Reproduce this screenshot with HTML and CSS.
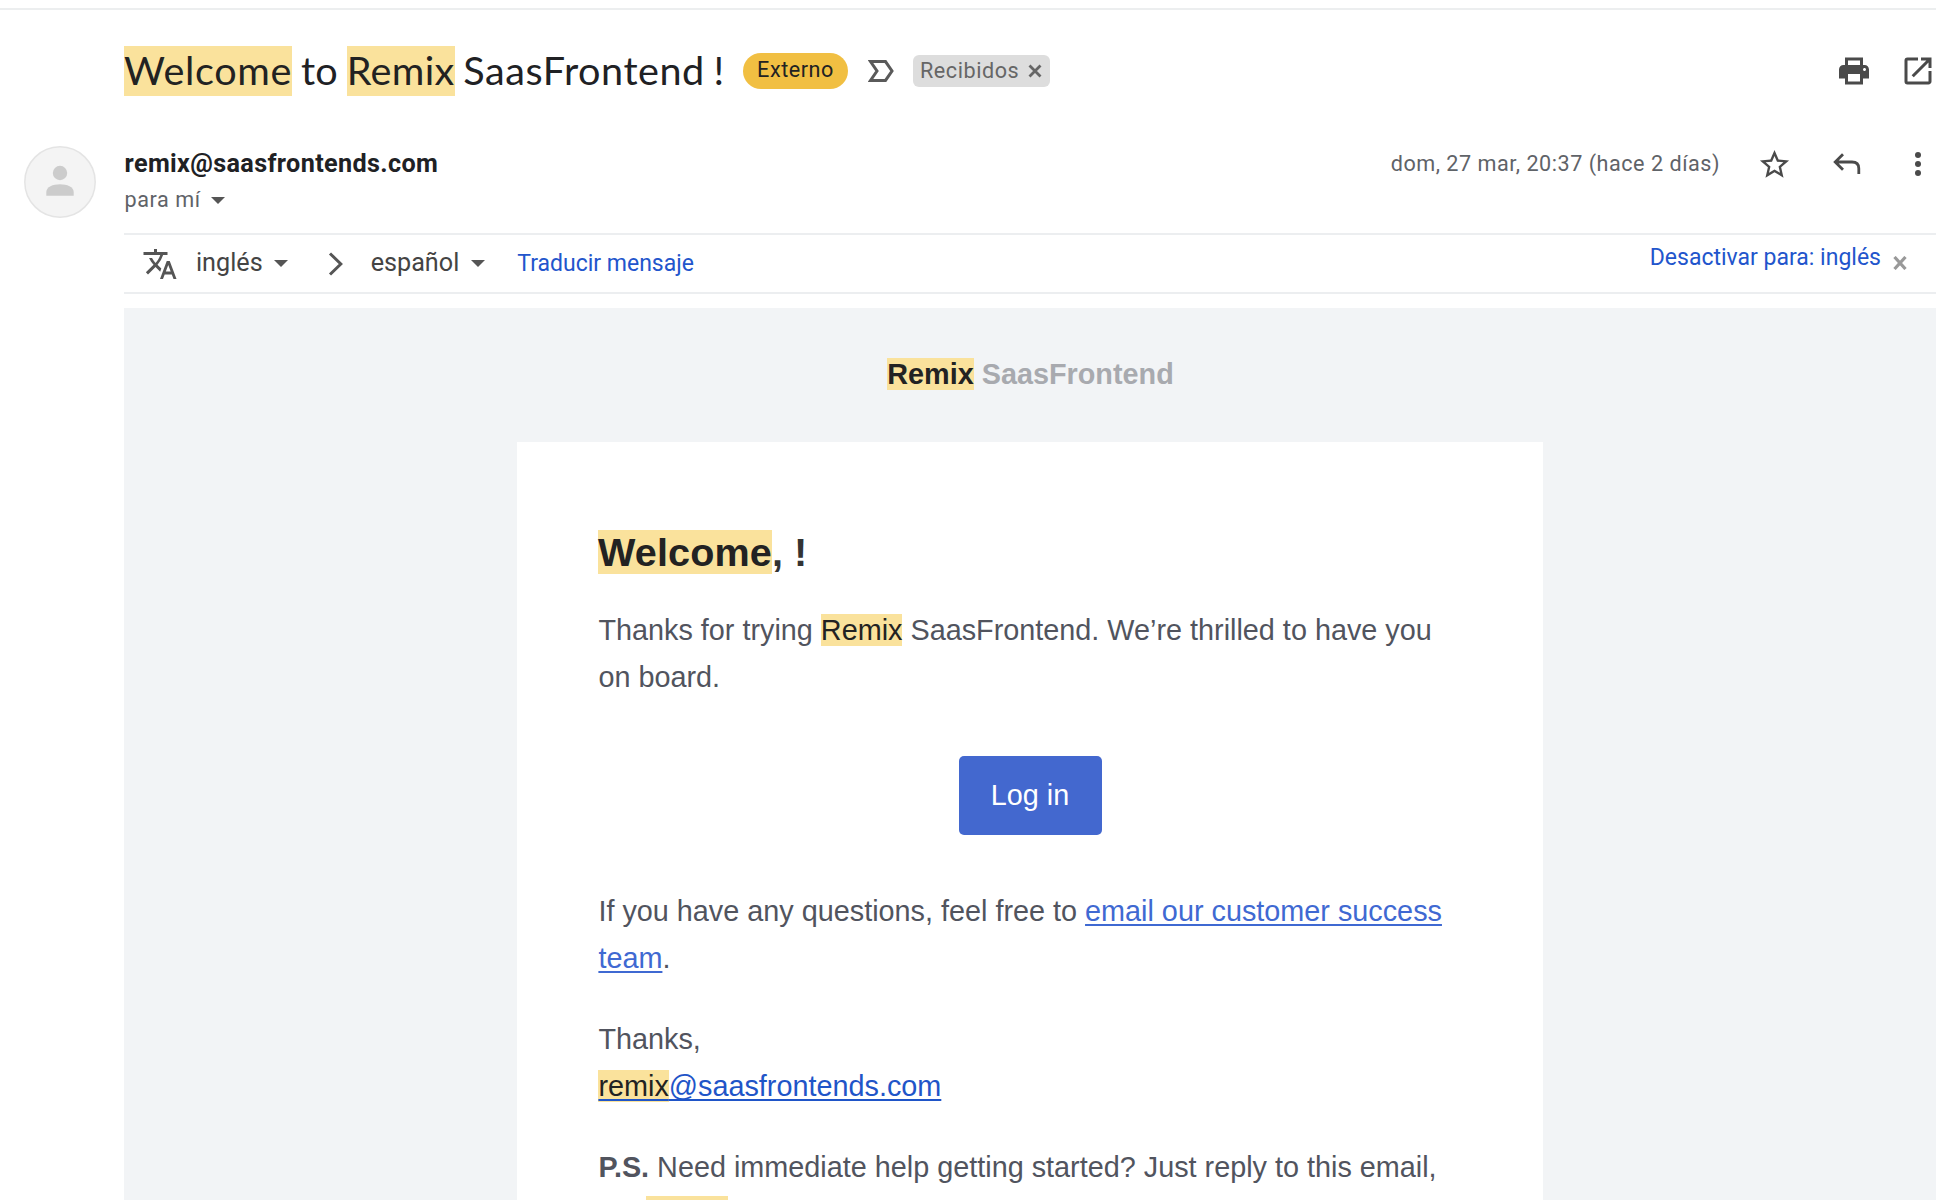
FILE: index.html
```html
<!DOCTYPE html>
<html lang="es">
<head>
<meta charset="utf-8">
<title>Welcome to Remix SaasFrontend !</title>
<link rel="stylesheet" href="styles.css">
</head>
<body>
<main class="page">
  <header class="subject-row">
    <h1 class="subject"><mark class="w-welcome">Welcome</mark><span class="w-to"> to </span><mark class="w-remix">Remix</mark><span class="w-rest"> SaasFrontend !</span></h1>
    <span class="badge">Externo</span>
    <svg class="important" viewBox="0 0 26 22"><path d="M2.5 1.6H17.5L24 11 17.5 20.4H2.5L9 11Z" fill="none" stroke="#5a5a5a" stroke-width="3"/></svg>
    <span class="label"><span class="label-text">Recibidos</span><svg class="label-x" viewBox="0 0 14 14"><path d="M1.5 1.5 12.5 12.5M12.5 1.5 1.5 12.5" stroke="#666" stroke-width="2.8"/></svg></span>
    <div class="subject-actions">
      <svg class="icon36" viewBox="0 0 24 24"><path fill="#4a4a4a" d="M19 8H5c-1.66 0-3 1.34-3 3v6h4v4h12v-4h4v-6c0-1.66-1.34-3-3-3zm-3 11H8v-5h8v5zm3-7c-.55 0-1-.45-1-1s.45-1 1-1 1 .45 1 1-.45 1-1 1zM18 3H6v5h12V3zm-2 5H8V5h8v3z"/></svg>
      <svg class="icon36" viewBox="0 0 24 24"><path fill="#4a4a4a" d="M19 19H5V5h7V3H5a2 2 0 0 0-2 2v14a2 2 0 0 0 2 2h14c1.1 0 2-.9 2-2v-7h-2v7zM14 3v2h3.59l-9.83 9.83 1.41 1.41L19 6.41V10h2V3h-7z"/></svg>
    </div>
  </header>

  <section class="sender-row">
    <svg class="avatar" viewBox="0 0 72 72"><circle cx="36" cy="36" r="35.2" fill="#f4f4f4" stroke="#e4e4e4" stroke-width="1.5"/><circle cx="36" cy="27" r="7.2" fill="#ccc"/><path fill="#ccc" d="M22.3 49.7V46C22.3 41 29 38.3 36 38.3S49.7 41 49.7 46V49.7Z"/></svg>
    <div class="sender">
      <div class="from">remix@saasfrontends.com</div>
      <div class="to">para mí<svg class="caret" viewBox="0 0 14 7"><path d="M0 0H14L7 7Z" fill="#555"/></svg></div>
    </div>
    <div class="meta">
      <span class="date">dom, 27 mar, 20:37 (hace 2 días)</span>
      <svg class="star" viewBox="0 0 24 24"><path fill="#4a4a4a" d="M22 9.24l-7.19-.62L12 2 9.19 8.63 2 9.24l5.46 4.73L5.82 21 12 17.27 18.18 21l-1.63-7.03L22 9.24zM12 15.4l-3.76 2.27 1-4.28-3.32-2.88 4.38-.38L12 6.1l1.71 4.04 4.38.38-3.32 2.88 1 4.28L12 15.4z"/></svg>
      <svg class="reply" viewBox="0 0 28 22"><path d="M10 1.2 2.2 9 10 16.8M2.2 9H19Q25.8 9 25.8 15.5V21" fill="none" stroke="#4a4a4a" stroke-width="2.8"/></svg>
      <svg class="dots" viewBox="0 0 6 24"><g fill="#4a4a4a"><circle cx="3" cy="3" r="3"/><circle cx="3" cy="12" r="3"/><circle cx="3" cy="21" r="3"/></g></svg>
    </div>
  </section>

  <section class="translate-row">
    <svg class="icon36" viewBox="0 0 24 24"><path fill="#555" d="M12.87 15.07l-2.54-2.51.03-.03A17.52 17.52 0 0 0 14.07 6H17V4h-7V2H8v2H1v1.99h11.17C11.5 7.92 10.44 9.75 9 11.35 8.07 10.32 7.3 9.19 6.69 8h-2c.73 1.63 1.73 3.17 2.98 4.56l-5.09 5.02L4 19l5-5 3.11 3.11.76-2.04zM18.5 10h-2L12 22h2l1.12-3h4.75L21 22h2l-4.5-12zm-2.62 7l1.62-4.33L19.12 17h-3.24z"/></svg>
    <span class="lang lang-from">inglés</span><svg class="caret" viewBox="0 0 14 7"><path d="M0 0H14L7 7Z" fill="#555"/></svg>
    <svg class="chevron" viewBox="0 0 16 24"><path d="M2 1.5 12.8 12 2 22.5" fill="none" stroke="#555" stroke-width="3"/></svg>
    <span class="lang lang-to">español</span><svg class="caret" viewBox="0 0 14 7"><path d="M0 0H14L7 7Z" fill="#555"/></svg>
    <a class="translate-link">Traducir mensaje</a>
    <a class="disable-link">Desactivar para: inglés</a>
    <svg class="close" viewBox="0 0 14 14"><path d="M1.5 1 12.5 13M12.5 1 1.5 13" stroke="#999" stroke-width="3.2"/></svg>
  </section>

  <article class="mail">
    <div class="brand"><mark>Remix</mark> SaasFrontend</div>
    <div class="card">
      <h2><mark>Welcome</mark>, !</h2>
      <p>Thanks for trying <mark>Remix</mark> SaasFrontend. We’re thrilled to have you<br>on board.</p>
      <a class="button">Log in</a>
      <p>If you have any questions, feel free to <a class="link">email our customer success<br>team</a>.</p>
      <p>Thanks,<br><a class="mailto"><mark>remix</mark>@saasfrontends.com</a></p>
      <p><b>P.S.</b> Need immediate help getting started? Just reply to this email,</p>
      <div class="next-highlight"></div>
    </div>
  </article>
</main>
</body>
</html>
```
FILE: styles.css
```css
* { box-sizing: border-box; }
body { margin: 0; background: #fff; font-family: Roboto, sans-serif; color: #202124; }
svg { display: block; flex: none; }
mark { background: #fae29c; color: #222; }
.page { width: 1936px; height: 1200px; overflow: hidden; padding-top: 8px; display: flex; flex-direction: column; }

.subject-row { flex: none; height: 125px; border-top: 2px solid #eceeef; padding-left: 124px; display: flex; align-items: flex-start; }
.subject { margin: 36px 0 0; width: 619px; font: 400 39.6px/48px Lato, sans-serif; color: #202124; white-space: pre; }
.subject mark { display: inline-block; height: 50px; }
.w-welcome { letter-spacing: .65px; }
.w-to { word-spacing: -1px; }
.w-remix { letter-spacing: .35px; }
.w-rest { letter-spacing: .55px; word-spacing: -2px; }
.badge { margin-top: 43px; width: 105px; height: 36px; border-radius: 18px; background: #f1bf42; text-align: center; font-size: 21.6px; line-height: 34px; letter-spacing: .54px; color: #222; }
.important { width: 26px; height: 22px; margin: 50px 19px 0 20px; }
.label { margin-top: 45px; width: 137px; height: 32px; border-radius: 6px; background: #ddd; padding-left: 7px; display: flex; align-items: center; gap: 9px; font-size: 21.6px; letter-spacing: .54px; color: #666; }
.label-text { padding-bottom: 2px; }
.label-x { width: 14px; height: 14px; }
.subject-actions { margin: 43px 0 0 auto; display: flex; gap: 28px; }
.icon36 { width: 36px; height: 36px; }

.sender-row { flex: none; height: 100px; padding-left: 24px; display: flex; }
.avatar { width: 72px; height: 72px; margin: 13px 28px 0 0; }
.sender { padding: 14px 0 0 .6px; }
.from { font-size: 25.2px; line-height: 34px; font-weight: 700; letter-spacing: .36px; }
.to { margin-top: 3px; display: flex; align-items: center; gap: 10.5px; font-size: 21.6px; line-height: 32px; letter-spacing: .54px; color: #5f6368; }
.caret { width: 14px; height: 7px; }
.meta { margin-left: auto; height: 62px; padding-right: 15px; display: flex; align-items: center; }
.date { padding-bottom: 2px; font-size: 21.6px; letter-spacing: .52px; color: #5f6368; }
.star { width: 35px; height: 35px; margin: 0 41.5px 0 36.5px; }
.reply { width: 28px; height: 22px; margin-right: 54px; }
.dots { width: 6px; height: 24px; }

.translate-row { flex: none; margin-left: 124px; height: 61px; border: solid #eceef0; border-width: 2px 0; padding: 0 29px 0 18px; display: flex; align-items: center; color: #444; }
.lang { padding-bottom: 2px; font-size: 25.2px; }
.lang-from { margin: 0 11px 0 18px; }
.chevron { width: 16px; height: 24px; margin: 0 27px 0 40px; }
.lang-to { margin-right: 12px; }
.translate-link, .disable-link { font-size: 23px; color: #2255cc; }
.translate-link { margin-left: 32px; }
.disable-link { margin: -13px 12px 0 auto; }
.close { width: 14px; height: 14px; margin-bottom: 2px; }

.mail { flex: none; margin: 14px 0 0 124px; height: 892px; background: #f2f4f6; font-family: "Liberation Sans", Arial, sans-serif; font-size: 28.8px; line-height: 46.8px; color: #51545e; overflow: hidden; }
.brand { height: 134px; padding: 43px 0 0 1px; text-align: center; font-weight: 700; color: #a8aaaf; }
.card { width: 1026px; height: 900px; margin: 0 auto; background: #fff; padding: 80px 81px; white-space: nowrap; }
h2 { margin: 0; font-size: 39.6px; line-height: 60px; letter-spacing: .12px; color: #333; }
p { margin: 25px 0 0; padding-left: .4px; }
.button { display: block; width: 143px; height: 79px; margin: 55px auto 53.4px; border-radius: 5px; background: #4368cf; color: #fff; text-align: center; line-height: 79px; }
.link, .mailto { text-decoration: underline; text-decoration-thickness: 2px; text-underline-offset: 3px; text-decoration-skip-ink: none; }
.link { color: #3f69d2; }
.mailto { color: #1f55c8; }
.button + p { margin-top: 0; }
.button ~ p + p { margin-top: 34.2px; }
.next-highlight { width: 82px; height: 33px; margin: 6px 0 0 48px; background: #fae29c; }
```
